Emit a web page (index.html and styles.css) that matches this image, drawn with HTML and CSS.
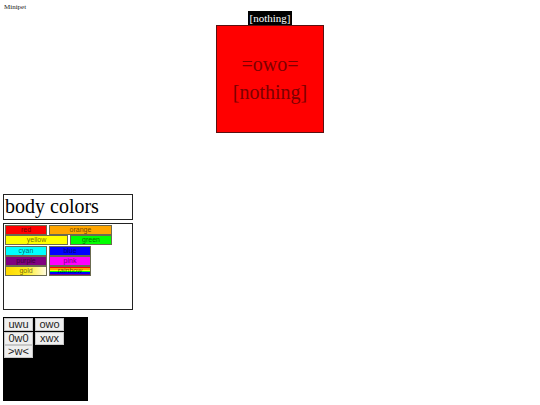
FILE: index.html
```html
<!DOCTYPE html>
<html>
<head>
<meta charset="utf-8">
<title>Minipet</title>
<link rel="stylesheet" href="styles.css">
</head>
<body>
<div class="brand">Minipet</div>
<div class="stage">
  <div class="pet-label">[nothing]</div>
  <div class="pet">
    <div class="face">=owo=</div>
    <div class="item">[nothing]</div>
  </div>
</div>
<div class="colors">
  <div class="title">body colors</div>
  <div class="panel">
    <div class="row"><button class="sw narrow red">red</button><button class="sw wide orange">orange</button></div>
    <div class="row"><button class="sw wide yellow">yellow</button><button class="sw narrow green">green</button></div>
    <div class="row"><button class="sw narrow cyan">cyan</button><button class="sw narrow blue">blue</button></div>
    <div class="row"><button class="sw narrow purple">purple</button><button class="sw narrow pink">pink</button></div>
    <div class="row"><button class="sw narrow gold">gold</button><button class="sw narrow rainbow">rainbow</button></div>
  </div>
</div>
<div class="faces">
  <div class="frow"><button class="fb">uwu</button><button class="fb">owo</button></div>
  <div class="frow"><button class="fb">0w0</button><button class="fb">xwx</button></div>
  <div class="frow"><button class="fb">&gt;w&lt;</button></div>
</div>
</body>
</html>
```
FILE: styles.css
```css
html, body {
  margin: 0;
  padding: 0;
  background: #fff;
}
body {
  width: 540px;
  height: 405px;
  overflow: hidden;
  font-family: "Liberation Serif", serif;
}
.brand {
  font-size: 7px;
  line-height: 9px;
  padding: 3px 0 0 4px;
  height: 8px;
  color: #222;
}
.stage {
  display: flex;
  flex-direction: column;
  align-items: center;
}
.pet-label {
  background: #000;
  color: #fff;
  font-size: 11px;
  line-height: 14px;
  height: 14px;
  padding: 0 2px;
}
.pet {
  box-sizing: border-box;
  width: 108px;
  height: 108px;
  background: #ff0000;
  border: 1px solid #5a1010;
  display: flex;
  flex-direction: column;
  align-items: center;
  justify-content: center;
  color: #7d0000;
  font-size: 20px;
  line-height: 28px;
  padding-bottom: 3px;
}
.colors {
  margin: 61px 0 0 3px;
}
.title {
  box-sizing: border-box;
  width: 130px;
  height: 26px;
  border: 1px solid #222;
  font-size: 20px;
  line-height: 22px;
  padding-left: 1px;
}
.panel {
  box-sizing: border-box;
  width: 130px;
  height: 87px;
  margin-top: 3px;
  border: 1px solid #222;
  padding: 1px 0 0 1px;
}
.row {
  display: flex;
  gap: 2px;
  height: 10.25px;
}
.sw {
  box-sizing: border-box;
  height: 10px;
  margin: 0;
  padding: 0;
  border: 1px solid #6b6b50;
  font-family: "Liberation Sans", sans-serif;
  font-size: 7px;
  line-height: 8px;
  color: rgba(0, 0, 0, 0.6);
  text-align: center;
}
.narrow { width: 42px; }
.wide { width: 63px; }
.red { background: #ff0000; }
.orange { background: #ffa500; }
.yellow { background: #ffff00; }
.green { background: #00ff00; }
.cyan { background: #00ffff; }
.blue { background: #0000ff; }
.purple { background: #800080; }
.pink { background: #ff00ff; }
.gold { background: linear-gradient(to right, #ffd800 0%, #ffee20 50%, #fffbe0 100%); }
.rainbow {
  background: linear-gradient(to bottom,
    #ff0000 0%, #ff0000 16%,
    #ffa500 16%, #ffa500 33%,
    #ffff00 33%, #ffff00 50%,
    #00ff00 50%, #00ff00 66%,
    #0000ff 66%, #0000ff 83%,
    #800080 83%, #800080 100%);
}
.faces {
  box-sizing: border-box;
  width: 85px;
  height: 84px;
  margin: 7px 0 0 3px;
  background: #000;
  padding: 1px 0 0 1px;
}
.frow {
  display: flex;
  gap: 2px;
  height: 13.5px;
}
.fb {
  box-sizing: border-box;
  width: 29px;
  height: 13px;
  margin: 0;
  padding: 0;
  background: #efefef;
  border: 1px solid #c8c8c8;
  color: #222;
  font-family: "Liberation Sans", sans-serif;
  font-size: 11px;
  line-height: 11px;
  text-align: center;
}
```
